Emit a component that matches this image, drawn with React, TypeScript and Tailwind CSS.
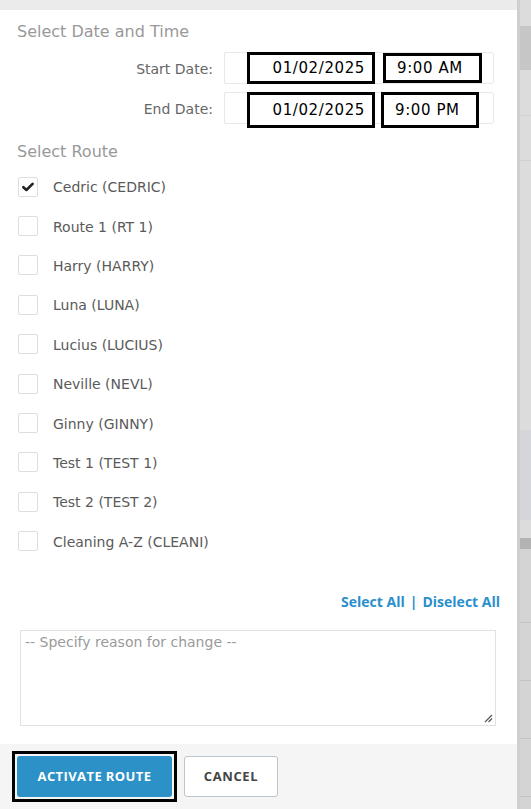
import React from "react";

const routes = [
  { name: "Cedric (CEDRIC)", checked: true },
  { name: "Route 1 (RT 1)" },
  { name: "Harry (HARRY)" },
  { name: "Luna (LUNA)" },
  { name: "Lucius (LUCIUS)" },
  { name: "Neville (NEVL)" },
  { name: "Ginny (GINNY)" },
  { name: "Test 1 (TEST 1)" },
  { name: "Test 2 (TEST 2)" },
  { name: "Cleaning A-Z (CLEANI)" },
];

const dv = { fontFamily: "'DejaVu Sans', sans-serif" };

function DateRow({ label, date, time, tall }: { label: string; date: string; time: string; tall?: boolean }) {
  return (
    <div className="flex items-center h-[32px]">
      <div className="w-[196px] text-right text-[14px] text-[#666] pt-[2px]" style={dv}>{label}</div>
      <div className="ml-[11px] relative w-[270px] h-[32px] border border-[#e8e8e8] rounded-[2px]">
        <div
          className={`absolute left-[22px] ${tall ? "top-[-1px] h-[36px]" : "top-[-1px] h-[32px]"} w-[128px] border-[3px] border-black flex items-center justify-end pr-[7px] pt-[1px] text-[15px] tracking-[0.6px] text-black bg-white`}
          style={dv}
        >
          {date}
        </div>
        <div
          className={`absolute ${tall ? "left-[156px] w-[98px] top-[-1px] h-[36px]" : "left-[158px] w-[99px] top-0 h-[30px]"} border-[3px] border-black flex items-center pl-[11px] pt-[1px] text-[15px] tracking-[0.6px] text-black bg-white`}
          style={dv}
        >
          {time}
        </div>
      </div>
    </div>
  );
}

export default function App() {
  return (
    <div className="flex w-[531px] h-[809px] overflow-hidden bg-white" style={{ fontFamily: "'Open Sans', sans-serif" }}>
      <div className="w-[517px] flex flex-col bg-white">
        <div className="h-[10px] bg-[#ebebeb]" />
        <div className="flex-1 flex flex-col px-[17px] pt-[12px]">
          <div className="text-[16px] leading-[20px] text-[#999]" style={dv}>Select Date and Time</div>
          <div className="mt-[10px] flex flex-col gap-[8px]">
            <DateRow label="Start Date:" date="01/02/2025" time="9:00 AM" />
            <DateRow label="End Date:" date="01/02/2025" time="9:00 PM" tall />
          </div>
          <div className="mt-[18px] text-[16px] leading-[20px] text-[#999]" style={dv}>Select Route</div>
          <div className="mt-[5px] flex flex-col">
            {routes.map((r) => (
              <div key={r.name} className="h-[39.4px] flex items-center">
                <div className="ml-[1px] w-[20px] h-[20px] border border-[#dedede] rounded-[2px] flex items-center justify-center bg-white">
                  {r.checked && (
                    <svg width="12" height="10" viewBox="0 0 12 10">
                      <path d="M1.4 5.2 L4.4 8 L10.6 1.8" fill="none" stroke="#222" strokeWidth="2.6" strokeLinecap="round" strokeLinejoin="round" />
                    </svg>
                  )}
                </div>
                <div className="ml-[15px] pt-[2px] text-[14px] text-[#5a5a5a]" style={dv}>{r.name}</div>
              </div>
            ))}
          </div>
          <div className="mt-[31px] flex justify-end text-[14px] leading-[20px] font-bold text-[#2a8fcc]">
            <span>Select All</span>
            <span className="mx-[5px]">|</span>
            <span>Diselect All</span>
          </div>
          <div className="mt-[18px] ml-[3px] w-[476px] h-[96px] border border-[#e2e2e2] relative px-[4px] pt-[1px]">
            <div className="text-[14px] text-[#9a9a9a]" style={dv}>-- Specify reason for change --</div>
            <svg className="absolute right-[2px] bottom-[2px]" width="10" height="10" viewBox="0 0 10 10">
              <path d="M2 9 L9 2 M5.5 9 L9 5.5" stroke="#555" strokeWidth="1.2" />
            </svg>
          </div>
        </div>
        <div className="h-[65px] bg-[#f5f5f5] flex items-center pl-[12px] gap-[7px]">
          <div className="border-[3px] border-black p-[2px]">
            <div className="w-[155px] h-[41px] bg-[#2b91c6] rounded-[3px] flex items-center justify-center text-white text-[13px] tracking-[0.4px] font-bold">
              ACTIVATE ROUTE
            </div>
          </div>
          <div className="w-[94px] h-[41px] bg-white border border-[#bcc4cc] rounded-[3px] flex items-center justify-center text-[#444] text-[13px] tracking-[0.6px] font-bold">
            CANCEL
          </div>
        </div>
      </div>
      <div className="w-[14px] h-full flex">
        <div className="w-[3px] h-full bg-[#cfcfcf]" />
        <div className="flex-1 flex flex-col bg-[#dcdcdc]">
          <div className="h-[26px] bg-[#dcdcdc]" />
          <div className="h-[44px] bg-[#c6c6c6]" />
          <div className="h-[45px]" />
          <div className="h-[45px] border-t border-[#d0d0d0]" />
          <div className="h-[270px] border-t border-[#d0d0d0]" />
          <div className="h-[90px] bg-[#d5d5dc]" />
          <div className="h-[18px]" />
          <div className="h-[11px] bg-[#b3b3b3]" />
          <div className="flex-1 bg-[#d4d4d4] flex flex-col">
            <div className="h-[74px] border-b border-[#c4c4c4]" />
            <div className="h-[58px] border-b border-[#c4c4c4]" />
            <div className="h-[58px] border-b border-[#c4c4c4]" />
            <div className="h-[58px] border-b border-[#c4c4c4]" />
          </div>
        </div>
      </div>
    </div>
  );
}
